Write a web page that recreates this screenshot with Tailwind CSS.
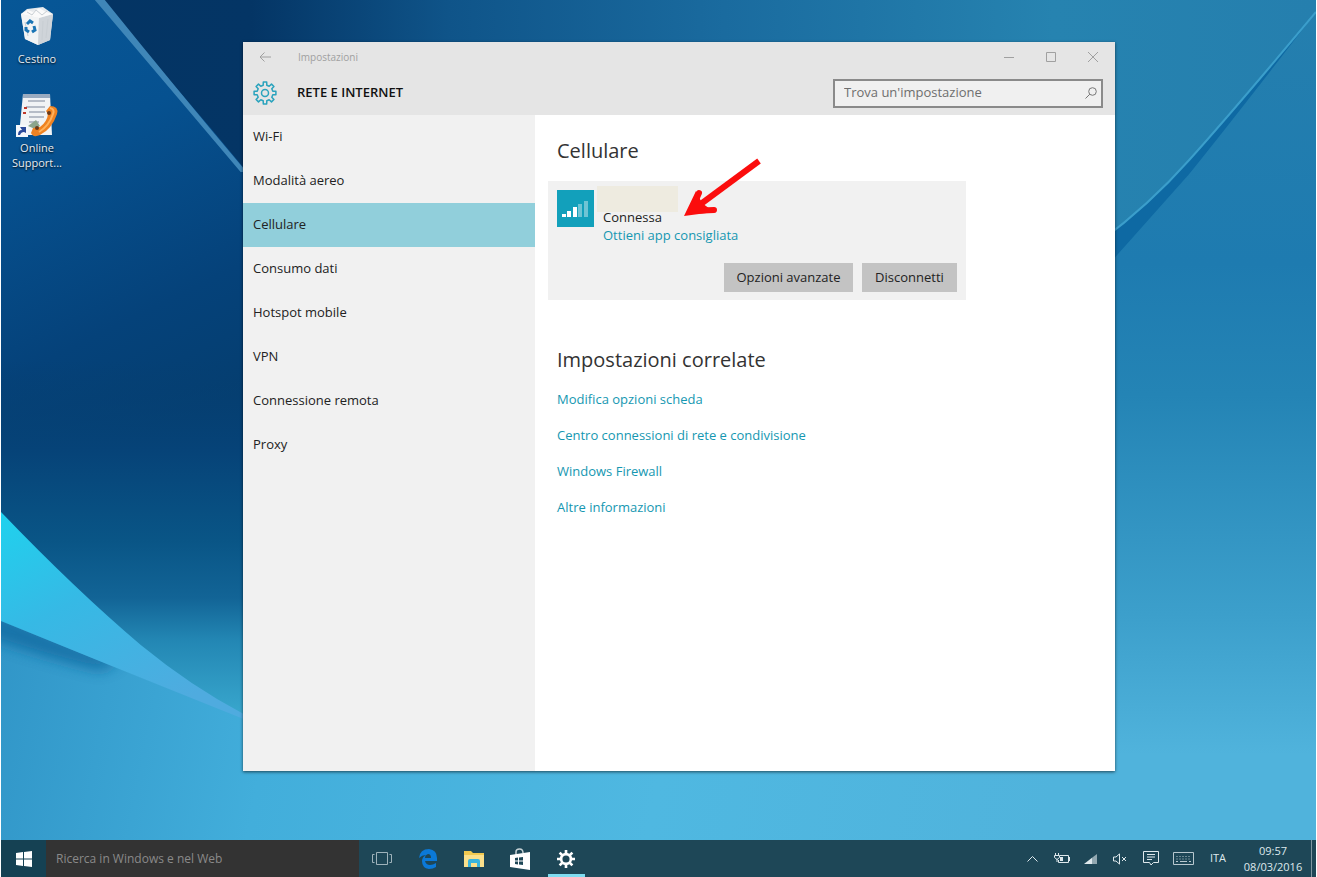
<!DOCTYPE html>
<html lang="it">
<head>
  <meta charset="UTF-8">
  <meta name="viewport" content="width=device-width, initial-scale=1.0">
  <title>Impostazioni</title>
  <script src="https://cdn.jsdelivr.net/npm/@tailwindcss/browser@4"></script>
</head>

<body class="bg-white font-['Open_Sans','Noto_Sans',sans-serif] text-[13px] text-[#222]">
  <div class="relative h-screen flex flex-col overflow-hidden border-x border-white">

    <!-- Wallpaper -->
    <svg class="absolute inset-0 w-full h-full" viewBox="0 0 1317 877" preserveAspectRatio="none" aria-hidden="true">
      <defs>
        <linearGradient id="sky" x1="0" x2="1" y1="0" y2="0">
          <stop offset="0" stop-color="#043463"/>
          <stop offset=".19" stop-color="#043565"/>
          <stop offset=".34" stop-color="#0f5489"/>
          <stop offset=".55" stop-color="#1a6b9f"/>
          <stop offset=".8" stop-color="#2683b0"/>
          <stop offset="1" stop-color="#257fae"/>
        </linearGradient>
        <linearGradient id="wedge" x1="0" x2=".25" y1="0" y2="1">
          <stop offset="0" stop-color="#075797"/>
          <stop offset=".35" stop-color="#065190"/>
          <stop offset=".75" stop-color="#05427a"/>
          <stop offset="1" stop-color="#053e70"/>
        </linearGradient>
        <linearGradient id="deep" x1="0" x2="0" y1="360" y2="720" gradientUnits="userSpaceOnUse">
          <stop offset="0" stop-color="#053e70" stop-opacity="0"/>
          <stop offset=".25" stop-color="#064378"/>
          <stop offset=".5" stop-color="#095586"/>
          <stop offset=".66" stop-color="#126496"/>
          <stop offset=".78" stop-color="#2387b4"/>
          <stop offset="1" stop-color="#3aa9cf"/>
        </linearGradient>
        <linearGradient id="right" x1="0" x2="0" y1="0" y2="877" gradientUnits="userSpaceOnUse">
          <stop offset="0" stop-color="#257fae"/>
          <stop offset=".3" stop-color="#1e7bb0"/>
          <stop offset=".45" stop-color="#2484b5"/>
          <stop offset=".7" stop-color="#3c9fcb"/>
          <stop offset=".86" stop-color="#50b3dc"/>
          <stop offset="1" stop-color="#50b3dc"/>
        </linearGradient>
        <linearGradient id="floor" x1="0" x2="1100" y1="640" y2="860" gradientUnits="userSpaceOnUse">
          <stop offset="0" stop-color="#3196c8"/>
          <stop offset=".25" stop-color="#42aedb"/>
          <stop offset=".6" stop-color="#4fb8e1"/>
          <stop offset=".95" stop-color="#50b3dc"/>
        </linearGradient>
        <linearGradient id="ribbon" x1="0" x2=".6" y1="0" y2="1">
          <stop offset="0" stop-color="#1fd2ee"/>
          <stop offset=".45" stop-color="#36b9e5"/>
          <stop offset="1" stop-color="#4fabdf"/>
        </linearGradient>
        <filter id="soft" x="-20%" y="-50%" width="140%" height="200%"><feGaussianBlur stdDeviation="7"/></filter>
        <clipPath id="floorClip"><path d="M0 621Q120 670 243 718V877H0Z"/></clipPath>
      </defs>
      <rect width="1317" height="877" fill="url(#sky)"/>
      <path d="M0 0H97Q175 85 245 170V480H0Z" fill="url(#wedge)"/>
      <path d="M94 0H104Q175 88 246 172H240Q168 87 94 0Z" fill="#3f86b8"/>
      <path d="M0 360H320V760H0Z" fill="url(#deep)"/>
      <path d="M1317 12Q1235 110 1190 160Q1150 205 1100 242V877H1317Z" fill="url(#right)"/>
      <path d="M1317 12Q1235 110 1190 160Q1150 205 1100 242V275L1190 174Q1240 112 1317 12Z" fill="#0e69a3"/>
      <path d="M1317 12Q1235 110 1190 160Q1150 205 1100 242" fill="none" stroke="#3b9ecb" stroke-width="2"/>
      <path d="M0 621Q120 670 243 718L400 750H1101V877H0Z" fill="url(#floor)"/>
      <g clip-path="url(#floorClip)">
        <path d="M-20 605L120 662L100 671Q50 660 -20 636Z" fill="#1670a5" opacity=".9" filter="url(#soft)"/>
      </g>
      <path d="M0 512Q75 590 140 645Q190 686 243 714V719Q120 670 0 621Z" fill="url(#ribbon)"/>
    </svg>

    <main class="relative flex-1">
      <!-- Desktop icons -->
      <div class="absolute left-0 top-[7px] w-[72px] flex flex-col items-center text-[11px] leading-[15px] text-[#e6edf3] text-center [text-shadow:0_1px_2px_#000]">
        <svg class="w-9 h-10" viewBox="0 0 36 40">
          <path d="M2 7L8 2L16 1L24 0L34 7L31 33L19 38L6 32Z" fill="#e6e9ec"/>
          <path d="M2 7L20 11L19 38L6 32Z" fill="#f2f4f5"/>
          <path d="M20 11L34 7L31 33L19 38Z" fill="#cfd4d9"/>
          <path d="M2 7L9 3L14 5L20 1L27 5L34 7L20 11Z" fill="#fafafa"/>
          <path d="M8 5L13 8L17 3L23 8L28 4M6 15L9 29M24 14L23 33M29 12L27 31" fill="none" stroke="#c8ced3"/>
          <path d="M8 17L11 14L14 16M15 19L16 23L13 25M10 25L7 23L7 20" fill="none" stroke="#1b75b5" stroke-width="3"/>
        </svg>
        <span class="mt-1">Cestino</span>
        <svg class="mt-[26px] w-11 h-12" viewBox="0 0 44 48">
          <path d="M8 2H35L37 43H4Z" fill="#f1f3f5"/>
          <path d="M8 2H35V6H8Z" fill="#9aabc0"/>
          <path d="M13 9H30M11 15H30M14 20H30M14 25H29M14 30H24" stroke="#a3abb8" stroke-width="1.5"/>
          <path d="M9 16H12M8 21H11" stroke="#c0392b" stroke-width="2"/>
          <path d="M13 34L21 28L25 34L20 37Z" fill="#8ba58c"/>
          <path d="M35 14Q44 14 42 22Q37 37 25 43Q18 46 16 41L18 36L25 35Q32 30 33 22L31 19Z" fill="#ef8222"/>
          <path d="M35 16Q40 17 38 22Q34 34 24 40" fill="none" stroke="#ffb25c" stroke-width="2"/>
          <circle cx="34" cy="21" r="2" fill="#6b3a1a"/><circle cx="22" cy="36" r="2" fill="#6b3a1a"/>
          <path d="M1 33H13V45H1Z" fill="#f5f8fc"/>
          <path d="M3 43Q3 38 7 38L5 35H11V41L9 40Q6 40 5 43Z" fill="#2b4a9b"/>
        </svg>
        <span>Online<br>Support...</span>
      </div>

      <!-- Settings window -->
      <section class="absolute left-[242px] right-[201px] top-[42px] bottom-[69px] flex flex-col bg-white shadow-[0_1px_3px_rgba(0,0,0,0.6)]">
        <header class="h-[73px] shrink-0 bg-[#e5e5e5]">
          <div class="h-[30px] flex items-center pl-4 pr-[17px] text-[#a0a0a0]">
            <button type="button" aria-label="Indietro" class="w-3">
              <svg class="w-3 h-3" viewBox="0 0 12 12" fill="none" stroke="currentColor"><path d="M12 6H1M5.500 1.500L1 6L5.500 10.500"/></svg>
            </button>
            <span class="ml-[27px] flex-1 text-[10px]">Impostazioni</span>
            <div class="flex gap-8">
              <button type="button" aria-label="Riduci a icona"><svg class="w-[10px] h-[10px]" viewBox="0 0 10 10" stroke="currentColor"><path d="M0 5.500H10"/></svg></button>
              <button type="button" aria-label="Ingrandisci"><svg class="w-[10px] h-[10px]" viewBox="0 0 10 10" fill="none" stroke="currentColor"><path d="M.5 .5H9.500V9.500H.5Z"/></svg></button>
              <button type="button" aria-label="Chiudi"><svg class="w-[10px] h-[10px]" viewBox="0 0 10 10" stroke="currentColor"><path d="M0 0L10 10M10 0L0 10"/></svg></button>
            </div>
          </div>
          <div class="flex items-center pl-[10px] pr-3 h-[42px]">
            <svg class="w-6 h-6" viewBox="0 0 24 24" fill="none" stroke="#2aa3bd" stroke-width="1.5" stroke-linejoin="round">
              <path d="M10.200 4.200L10.300 1.100H13.700L13.800 4.200L16.200 5.200L18.500 3.100L20.900 5.500L18.800 7.800L19.800 10.200L22.900 10.300V13.700L19.800 13.800L18.800 16.200L20.900 18.500L18.500 20.900L16.200 18.800L13.800 19.800L13.700 22.900H10.300L10.200 19.800L7.800 18.800L5.500 20.900L3.100 18.500L5.200 16.200L4.200 13.800L1.100 13.700V10.300L4.200 10.200L5.200 7.800L3.100 5.500L5.500 3.100L7.800 5.200Z"/>
              <circle cx="12" cy="12" r="3.500"/>
            </svg>
            <h1 class="ml-5 flex-1 font-semibold text-[#111]">RETE E INTERNET</h1>
            <label class="flex items-center w-[270px] h-[29px] border-2 border-[#8a8a8a] bg-[#f0f0f0] pl-[9px] pr-1">
              <input type="search" aria-label="Trova un'impostazione" placeholder="Trova un'impostazione" class="min-w-0 flex-1 outline-none placeholder:text-[#6e6e6e]">
              <svg class="w-3 h-3" viewBox="0 0 12 12" fill="none" stroke="#777"><circle cx="7.500" cy="4.500" r="3.800"/><path d="M4.800 7.200L.5 11.500"/></svg>
            </label>
          </div>
        </header>

        <div class="flex flex-1 min-h-0">
          <nav class="w-[292px] shrink-0 bg-[#f1f1f1] flex flex-col">
            <a href="#" class="h-11 flex items-center pl-[10px]">Wi-Fi</a>
            <a href="#" class="h-11 flex items-center pl-[10px]">Modalità aereo</a>
            <a href="#" class="h-11 flex items-center pl-[10px] bg-[#91cfdb]" aria-current="page">Cellulare</a>
            <a href="#" class="h-11 flex items-center pl-[10px]">Consumo dati</a>
            <a href="#" class="h-11 flex items-center pl-[10px]">Hotspot mobile</a>
            <a href="#" class="h-11 flex items-center pl-[10px]">VPN</a>
            <a href="#" class="h-11 flex items-center pl-[10px]">Connessione remota</a>
            <a href="#" class="h-11 flex items-center pl-[10px]">Proxy</a>
          </nav>

          <div class="flex-1 pl-[13px] pt-[22px]">
            <h2 class="pl-[9px] text-[20px] leading-7 text-[#333]">Cellulare</h2>

            <div class="relative mt-4 w-[418px] bg-[#f1f1f1] pt-[5px] pb-2 px-[9px]">
              <div class="flex">
                <svg class="mt-1 w-[37px] h-[37px] bg-[#12a0bb]" viewBox="0 0 37 37">
                  <path d="M5 24H9V27H5ZM10 21H14V27H10ZM16 17H20V27H16Z" fill="#fff"/>
                  <path d="M21 14H25V27H21ZM27 11H31V27H27Z" fill="#6fc4d4"/>
                </svg>
                <div class="ml-[3px] leading-[18px]">
                  <div class="w-[81px] h-[26px] bg-[#eeebe0]"></div>
                  <p class="pl-[6px] -mt-1">Connessa</p>
                  <a href="#" class="block pl-[6px] text-[#1597b1]">Ottieni app consigliata</a>
                </div>
              </div>
              <div class="mt-[19px] flex justify-end gap-[9px]">
                <button type="button" class="w-[129px] h-[29px] bg-[#c3c3c3]">Opzioni avanzate</button>
                <button type="button" class="w-[95px] h-[29px] bg-[#c3c3c3]">Disconnetti</button>
              </div>

              <!-- Red pointer to the link -->
              <svg class="absolute left-[134px] -top-6 w-[80px] h-[62px]" viewBox="0 0 80 62" fill="none" stroke="#fb0d0d">
                <path d="M77 4L12 52" stroke-width="6"/>
                <path d="M17 36L9 54L32 53" stroke-width="6" stroke-linecap="round"/>
                <path d="M2 59L14 34L20 46L32 55Z" fill="#fb0d0d" stroke="none"/>
              </svg>
            </div>

            <h2 class="mt-[46px] pl-[9px] text-[20px] leading-7 text-[#333]">Impostazioni correlate</h2>
            <ul class="mt-2 pl-[9px] text-[#1597b1]">
              <li class="h-9 flex items-center"><a href="#">Modifica opzioni scheda</a></li>
              <li class="h-9 flex items-center"><a href="#">Centro connessioni di rete e condivisione</a></li>
              <li class="h-9 flex items-center"><a href="#">Windows Firewall</a></li>
              <li class="h-9 flex items-center"><a href="#">Altre informazioni</a></li>
            </ul>
          </div>
        </div>
      </section>
    </main>

    <!-- Taskbar -->
    <footer class="relative h-[37px] flex items-stretch bg-[#1e4757] text-[#dfe9ed]">
      <button type="button" aria-label="Start" class="w-[45px] flex items-center justify-center bg-[#154153]">
        <svg class="w-4 h-4" viewBox="0 0 16 16" fill="#fff"><path d="M0 2L7 1V7.500H0ZM8 .9L16 0V7.500H8ZM0 8.500H7V15L0 14ZM8 8.500H16V16L8 15.100Z"/></svg>
      </button>
      <input type="text" aria-label="Ricerca in Windows e nel Web" placeholder="Ricerca in Windows e nel Web" class="w-[313px] pl-[10px] bg-[#333] text-[12px] outline-none placeholder:text-[#8a8a8a]">
      <div class="flex">
        <button type="button" aria-label="Visualizzazione attività" class="w-[46px] flex items-center justify-center">
          <svg class="w-5 h-4" viewBox="0 0 20 16" fill="none" stroke="#9fb3bb"><path d="M4.500 1.500H15.500V13.500H4.500ZM2.500 3.500H.5V11.500H2.500M17.500 3.500H19.500V11.500H17.500"/></svg>
        </button>
        <button type="button" aria-label="Microsoft Edge" class="w-[46px] flex items-center justify-center">
          <svg class="w-5 h-5" viewBox="0 0 20 20" fill="#0b79d8"><path d="M1 9Q2 0 11 0Q19 1 19 9V12H7Q8 16 12 16Q15 16 18 14V18Q15 20 11 20Q4 19 4 12Q4 8 8 6Q4 6 1 9ZM7 9H13Q13 5 10 5Q7 6 7 9Z" fill-rule="evenodd"/></svg>
        </button>
        <button type="button" aria-label="Esplora file" class="w-[46px] flex items-center justify-center">
          <svg class="w-5 h-4" viewBox="0 0 20 16"><path d="M0 0H7L9 2H20V16H0Z" fill="#f2c94f"/><path d="M0 4H20V16H0Z" fill="#fbe08b"/><path d="M4 16V10Q4 8 6 8H14Q16 8 16 10V16H13V12H7V16Z" fill="#39b4dd"/></svg>
        </button>
        <button type="button" aria-label="Store" class="w-[46px] flex items-center justify-center">
          <svg class="w-5 h-[22px]" viewBox="0 0 20 22"><path d="M6 7V4Q6 1 9.500 1Q13 1 13 5" fill="none" stroke="#c7d2d6" stroke-width="1.5"/><path d="M0 7L20 4V22L0 19Z" fill="#fff"/><path d="M5 10L8 9.600V12.500H5ZM9 9.500L13 9V12.500H9ZM5 13.500H8V16.400L5 16ZM9 13.500H13V17L9 16.500Z" fill="#1e4757"/></svg>
        </button>
        <button type="button" aria-label="Impostazioni" class="w-[46px] flex items-stretch justify-center">
          <span class="flex w-[37px] items-center justify-center border-b-[3px] border-[#7fdcf0] pt-[3px]">
            <svg class="w-[18px] h-[18px]" viewBox="0 0 24 24" fill="none" stroke="#fff" stroke-width="3.500">
              <circle cx="12" cy="12" r="6.500"/>
              <path d="M12 0V5M12 19V24M0 12H5M19 12H24M3.500 3.500L7 7M17 17L20.500 20.500M3.500 20.500L7 17M17 7L20.500 3.500"/>
            </svg>
          </span>
        </button>
      </div>

      <div class="ml-auto flex items-center text-[11px]">
        <svg class="w-[11px] h-2" viewBox="0 0 11 8" fill="none" stroke="currentColor"><path d="M.5 6.500L5.500 1.500L10.500 6.500"/></svg>
        <svg class="ml-4 w-4 h-3" viewBox="0 0 16 12" fill="none" stroke="currentColor"><path d="M6 2.500H14.500V9.500H4.500V7M15.500 4V8M1.500 0V2M4.500 0V2M.5 2.500H5.500V4.500L3 6.500L.5 4.500ZM3 6V9"/><path d="M6 4H9V8H6Z" fill="currentColor" stroke="none"/></svg>
        <svg class="ml-[14px] w-[13px] h-[10px]" viewBox="0 0 13 10" fill="currentColor"><path d="M0 10L8 3.800V10Z"/><path d="M8 3.800L13 0V10H8Z" opacity=".6"/></svg>
        <svg class="ml-4 w-[14px] h-3" viewBox="0 0 14 12" fill="none" stroke="currentColor"><path d="M.5 4H3L6.500 .9V11.100L3 8H.5ZM9 4L13 8M13 4L9 8"/></svg>
        <svg class="ml-4 w-4 h-[15px]" viewBox="0 0 16 15" fill="none" stroke="currentColor"><path d="M.5 .5H15.500V11.500H10.500L8 14L6.500 11.500H.5ZM4 3.500H12M4 6H12M4 8.500H9"/></svg>
        <svg class="ml-[14px] w-[21px] h-[13px]" viewBox="0 0 21 13" fill="none" stroke="currentColor" opacity=".8"><path d="M.5 .5H20.500V12.500H.5Z"/><path d="M3 4.500H18M3 7H18" stroke-dasharray="2 1" opacity=".5"/><path d="M3 9.500H5M7 9.500H14M16 9.500H18"/></svg>
        <span class="ml-4">ITA</span>
        <time class="ml-[17px] w-[60px] text-center leading-4">09:57<br>08/03/2016</time>
        <span class="ml-2 h-full w-[5px] border-l border-[#7d97a1]"></span>
      </div>
    </footer>
  </div>
</body>
</html>
